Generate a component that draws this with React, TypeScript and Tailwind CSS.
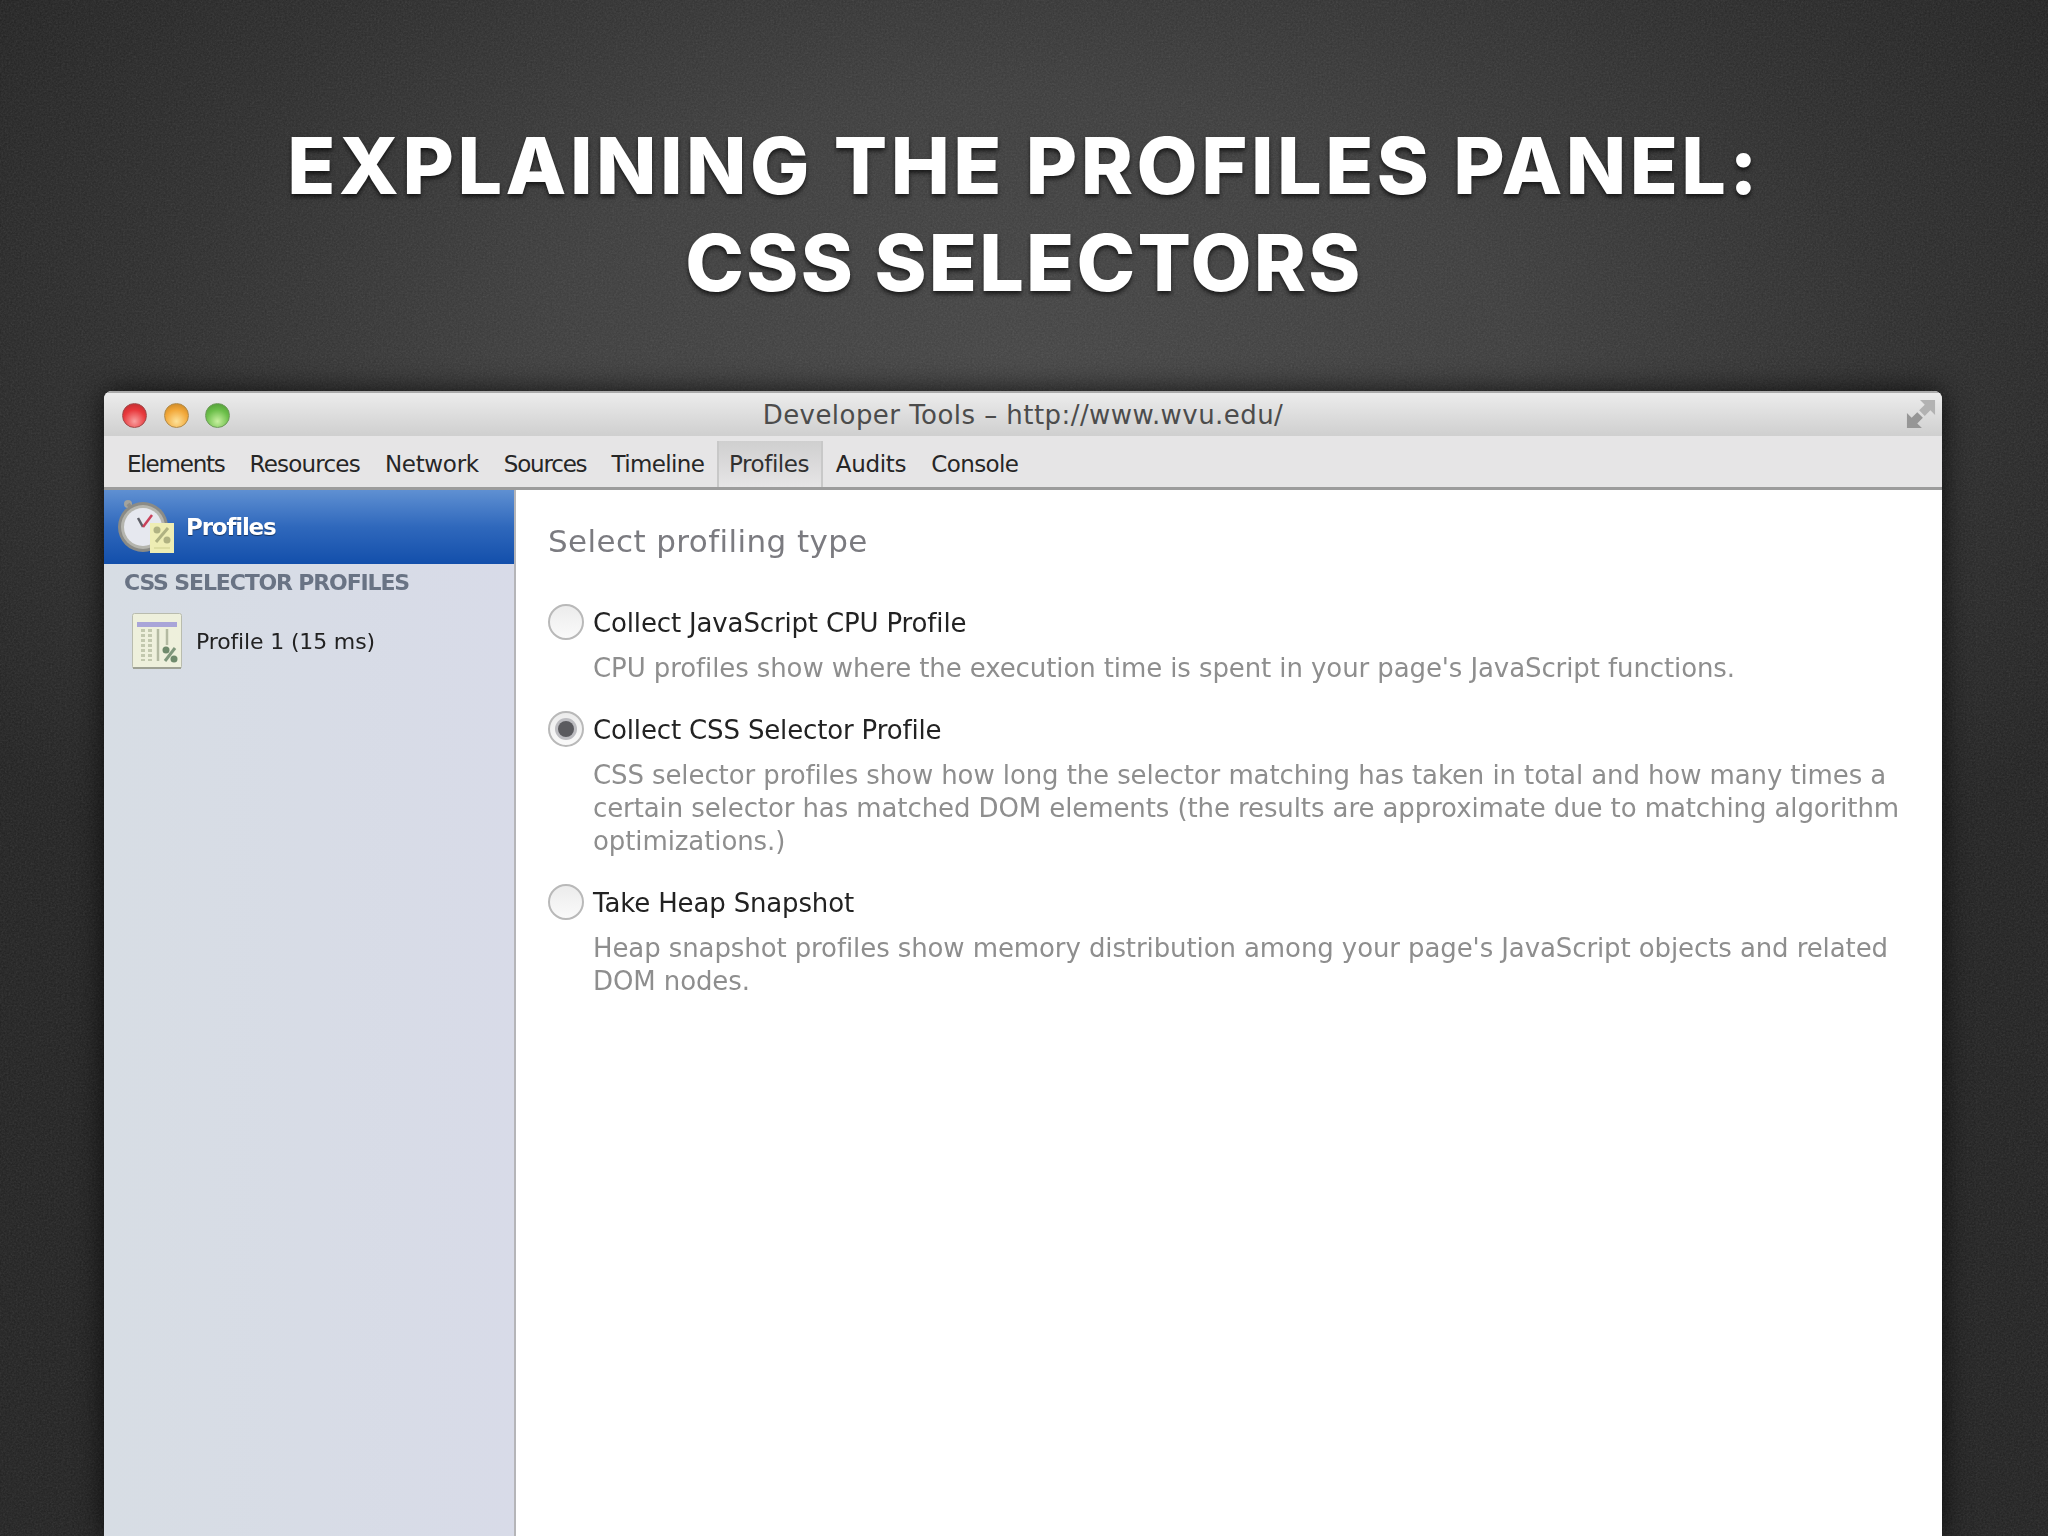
import React from 'react';

const tabs = [
  { name: 'Elements', cls: 'tracking-[-1.2px]' },
  { name: 'Resources', cls: 'tracking-[-0.8px]' },
  { name: 'Network', cls: 'tracking-[-0.3px]' },
  { name: 'Sources', cls: 'tracking-[-1.2px]' },
  { name: 'Timeline', cls: 'tracking-[-0.6px]' },
  { name: 'Profiles', cls: 'tracking-[-0.4px]' },
  { name: 'Audits', cls: 'tracking-[-0.3px]' },
  { name: 'Console', cls: 'tracking-[-0.6px]' },
];

const options = [
  {
    label: 'Collect JavaScript CPU Profile',
    desc: ["CPU profiles show where the execution time is spent in your page's JavaScript functions."],
    checked: false,
  },
  {
    label: 'Collect CSS Selector Profile',
    desc: [
      'CSS selector profiles show how long the selector matching has taken in total and how many times a',
      'certain selector has matched DOM elements (the results are approximate due to matching algorithm',
      'optimizations.)',
    ],
    checked: true,
  },
  {
    label: 'Take Heap Snapshot',
    desc: [
      "Heap snapshot profiles show memory distribution among your page's JavaScript objects and related",
      'DOM nodes.',
    ],
    checked: false,
  },
];

const Stopwatch = () => (
  <svg width="60" height="60" viewBox="0 0 60 60" className="shrink-0">
    <circle cx="10" cy="7" r="4" fill="#a3a39d" />
    <path d="M10 7l6 7" stroke="#8d8d88" strokeWidth="4" />
    <circle cx="25" cy="30" r="25" fill="#8b8b86" />
    <circle cx="25" cy="30" r="22" fill="#b5b5ae" />
    <circle cx="25" cy="30" r="19" fill="#e6e8ef" />
    <path d="M20 21l5 9" stroke="#5d5e66" strokeWidth="2.5" />
    <path d="M25 30l9-12" stroke="#c9405a" strokeWidth="2.5" />
    <rect x="32" y="26" width="24" height="30" fill="#eeedb4" />
    <path d="M50 31L38 45" stroke="#b0b282" strokeWidth="3" />
    <circle cx="39" cy="33" r="3.5" fill="#b0b282" />
    <circle cx="49" cy="43" r="3.5" fill="#b0b282" />
    <path d="M36 51h16" stroke="#d8d89c" strokeWidth="1.5" />
  </svg>
);

const SheetIcon = () => (
  <svg width="50" height="56" viewBox="0 0 50 56" className="shrink-0">
    <rect x="0.5" y="0.5" width="49" height="55" rx="2" fill="#eef0dc" stroke="#b9bcae" />
    <rect x="1" y="54" width="48" height="2" fill="#9ea193" />
    <rect x="5" y="9" width="40" height="5" fill="#a9a5d8" />
    <path d="M11 16v32M18 16v32" stroke="#c2c8ae" strokeWidth="4" strokeDasharray="3 2" />
    <path d="M26 16v32M35 16v16" stroke="#b4baa2" strokeWidth="2.5" />
    <path d="M43 35L33 48" stroke="#7f977c" strokeWidth="3" />
    <circle cx="34" cy="37" r="3.5" fill="#6f8a6c" />
    <circle cx="42" cy="46" r="3.5" fill="#6f8a6c" />
  </svg>
);

const Radio = ({ checked }: { checked: boolean }) => (
  <div className="w-[36px] h-[36px] shrink-0 mt-[-3px] rounded-full border-2 border-[#b9b9b9] bg-gradient-to-b from-[#ececec] to-[#fafafa] flex items-center justify-center">
    {checked && <div className="w-[16px] h-[16px] rounded-full bg-[#5a5a5e] ring-3 ring-[#bcbcc0]" />}
  </div>
);

const App = () => {
  return (
    <div className="w-[2048px] h-[1536px] overflow-hidden flex flex-col relative bg-[radial-gradient(ellipse_60%_45%_at_50%_24%,#444444_0%,#3c3c3c_40%,#2c2c2c_72%,#212121_100%)] font-['DejaVu_Sans',sans-serif]">
      <svg className="absolute inset-0 w-full h-full opacity-[0.14] pointer-events-none" aria-hidden="true">
        <filter id="grain">
          <feTurbulence type="fractalNoise" baseFrequency="0.55" numOctaves="3" />
          <feColorMatrix type="saturate" values="0" />
        </filter>
        <rect width="100%" height="100%" filter="url(#grain)" />
      </svg>

      <h1 className="relative mt-[117px] text-center text-white text-[79px] leading-[97px] font-extrabold font-['Inter',sans-serif] [text-shadow:0_3px_4px_rgba(0,0,0,0.65)]">
        <span className="tracking-[3.5px]">EXPLAINING THE PROFILES PANEL:</span>
        <br />
        <span className="tracking-[2.2px]">CSS SELECTORS</span>
      </h1>

      <div className="relative mt-[80px] ml-[104px] w-[1838px] flex-1 min-h-0 flex flex-col rounded-t-[8px] overflow-hidden bg-white shadow-[0_0_28px_rgba(0,0,0,0.75)] blur-[0.7px]">
        <div className="h-[45px] shrink-0 relative flex items-center justify-center bg-gradient-to-b from-[#ececec] to-[#cfcfcf] border-t-2 border-[#aaaaaa]">
          <div className="absolute left-[18px] top-[10px] flex gap-[16.5px]">
            <div className="w-[25px] h-[25px] rounded-full border border-[#a04a4a] bg-[radial-gradient(circle_at_50%_75%,#f9a0a0_0%,#e8383c_55%,#b52a2e_100%)]" />
            <div className="w-[25px] h-[25px] rounded-full border border-[#b08a4a] bg-[radial-gradient(circle_at_50%_75%,#fde29a_0%,#f2a83a_55%,#c07e20_100%)]" />
            <div className="w-[25px] h-[25px] rounded-full border border-[#6d9a5a] bg-[radial-gradient(circle_at_50%_75%,#c8f0a0_0%,#6cbf4a_55%,#4a9432_100%)]" />
          </div>
          <span className="text-[26px] leading-none text-[#4c4c4c] tracking-[0.45px]">Developer Tools – http://www.wvu.edu/</span>
          <svg width="30" height="30" viewBox="0 0 32 32" className="absolute right-[6px] top-[6px]">
            <path d="M31 1v16l-5-5-6 6-6-6 6-6-5-5z" fill="#b2b2b2" />
            <path d="M1 31V15l5 5 6-6 6 6-6 6 5 5z" fill="#969696" />
          </svg>
        </div>

        <div className="h-[54px] shrink-0 flex items-stretch pl-[10.5px] bg-[#e6e5e6] border-b-[3px] border-[#9c9c9c]">
          {tabs.map((t) =>
            t.name === 'Profiles' ? (
              <div
                key={t.name}
                className={`flex items-center pl-[10px] pr-[12px] mt-[5px] pt-[1px] border-x-2 border-[#c8c8c8] bg-gradient-to-b from-[#cfcfcf] to-[#e6e5e6] text-[23px] text-[#303030] ${t.cls}`}
              >
                {t.name}
              </div>
            ) : (
              <div key={t.name} className={`flex items-center pt-[6px] px-[12.5px] text-[23px] text-[#262626] ${t.cls}`}>
                {t.name}
              </div>
            ),
          )}
        </div>

        <div className="flex-1 min-h-0 flex">
          <div className="w-[412px] shrink-0 flex flex-col bg-gradient-to-r from-[#d7dde4] to-[#d8dbe8] border-r-2 border-[#b5b5b8]">
            <div className="h-[74px] shrink-0 flex items-center gap-[8px] pl-[14px] bg-gradient-to-b from-[#5f90d2] via-[#2f68bc] to-[#124fab]">
              <Stopwatch />
              <span className="text-[23px] font-bold text-white tracking-[-1.2px] [text-shadow:0_1px_1px_rgba(0,0,0,0.5)]">Profiles</span>
            </div>
            <div className="mt-[6px] pl-[20px] text-[22px] leading-[26px] font-bold text-[#697384] tracking-[-1.15px] whitespace-nowrap">CSS SELECTOR PROFILES</div>
            <div className="mt-[17px] ml-[28px] flex items-center gap-[14px]">
              <SheetIcon />
              <span className="text-[22px] text-[#222222] tracking-[-0.15px] whitespace-nowrap">Profile 1 (15 ms)</span>
            </div>
          </div>

          <div className="flex-1 pl-[32px] pt-[33px]">
            <div className="text-[31px] leading-[36px] text-[#7b7b80] tracking-[0.4px]">Select profiling type</div>
            <div className="mt-[48px] flex flex-col gap-[29px]">
              {options.map((o) => (
                <div key={o.label} className="flex gap-[9px]">
                  <Radio checked={o.checked} />
                  <div className="flex flex-col">
                    <div className="text-[26px] leading-[33px] text-[#222222] tracking-[-0.15px] whitespace-nowrap">{o.label}</div>
                    <div className="mt-[12px] text-[26px] leading-[33px] text-[#8e8e8e] tracking-[-0.1px]">
                      {o.desc.map((line) => (
                        <div key={line} className="whitespace-nowrap">{line}</div>
                      ))}
                    </div>
                  </div>
                </div>
              ))}
            </div>
          </div>
        </div>
      </div>
    </div>
  );
};

export default App;
